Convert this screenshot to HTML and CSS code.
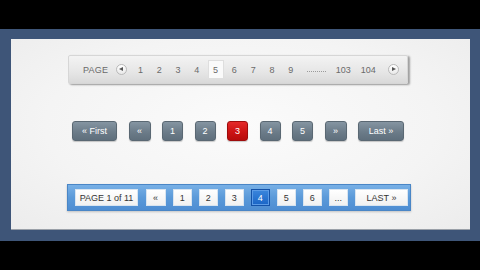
FILE: index.html
```html
<!DOCTYPE html>
<html>
<head>
    <title>Pagination</title>
    <link rel="stylesheet" href="styles.css">
</head>
<body>
    <div class="frame">
        <div class="panel">
            <div class="pager-gray">
                <span class="label">PAGE</span>
                <span class="circle prev"></span>
                <span class="num">1</span>
                <span class="num">2</span>
                <span class="num">3</span>
                <span class="num">4</span>
                <span class="num active">5</span>
                <span class="num">6</span>
                <span class="num">7</span>
                <span class="num">8</span>
                <span class="num">9</span>
                <span class="dots"></span>
                <span class="num wide">103</span>
                <span class="num wider">104</span>
                <span class="circle next"></span>
            </div>

            <div class="pager-buttons">
                <button class="btn first">&laquo; First</button>
                <button class="btn arrow">&laquo;</button>
                <button class="btn">1</button>
                <button class="btn">2</button>
                <button class="btn current">3</button>
                <button class="btn">4</button>
                <button class="btn">5</button>
                <button class="btn arrow">&raquo;</button>
                <button class="btn last">Last &raquo;</button>
            </div>

            <div class="pager-blue">
                <span class="box info">PAGE 1 of 11</span>
                <span class="box prev-box">&laquo;</span>
                <span class="box">1</span>
                <span class="box">2</span>
                <span class="box">3</span>
                <span class="box selected">4</span>
                <span class="box">5</span>
                <span class="box">6</span>
                <span class="box">...</span>
                <span class="box last-box">LAST &raquo;</span>
            </div>
        </div>
    </div>
</body>
</html>
```
FILE: styles.css
```css
body {
    margin: 0;
    height: 270px;
    background-color: #000;
    padding-top: 29px;
    box-sizing: border-box;
    font-family: "Liberation Sans", Arial, sans-serif;
}

.frame {
    height: 212px;
    box-sizing: border-box;
    padding: 10px 10px 11px 11px;
    background-color: #3e5578;
}

.panel {
    height: 191px;
    box-sizing: border-box;
    padding-left: 57px;
    display: flex;
    flex-direction: column;
    align-items: flex-start;
    background: radial-gradient(ellipse at 50% 45%, #fbfbfb 0%, #f4f4f4 60%, #ececec 100%);
    box-shadow: inset 0 -1px 0 #9aa0a8;
}

/* top: grey strip */
.pager-gray {
    margin-top: 16px;
    width: 340px;
    height: 29px;
    box-sizing: border-box;
    display: flex;
    align-items: center;
    padding-left: 14px;
    background: linear-gradient(#f3f3f3, #e6e6e6 60%, #d9d9d9);
    border: 1px solid #d6d6d6;
    border-radius: 2px;
    box-shadow: 2px 1px 2px rgba(0, 0, 0, 0.35), 0 1px 0 #e9e9e9;
    font-size: 9px;
    color: #6a6a6a;
}

.label {
    width: 22px;
    letter-spacing: 0.2px;
}

.circle {
    position: relative;
    width: 9px;
    height: 9px;
    margin-left: 11px;
    margin-right: 4px;
    border: 1px solid #b9b9b9;
    border-radius: 50%;
    background: linear-gradient(#ffffff, #e9e9e9);
}

.circle::after {
    content: "";
    position: absolute;
    top: 2px;
    border-top: 2.5px solid transparent;
    border-bottom: 2.5px solid transparent;
}

.circle.prev::after {
    left: 2px;
    border-right: 4px solid #555;
}

.circle.next {
    margin-left: 5px;
}

.circle.next::after {
    left: 3px;
    border-left: 4px solid #555;
}

.num {
    width: 18.8px;
    text-align: center;
    line-height: 18px;
}

.num.active {
    width: 16px;
    margin: 0 1.4px;
    height: 19px;
    line-height: 19px;
    background-color: #fafafa;
    border: 1px solid #dedede;
    box-sizing: border-box;
}

.num.wide {
    width: 20px;
}

.num.wider {
    width: 30px;
}

.dots {
    width: 19px;
    margin: 0 7px;
    height: 1px;
    margin-top: 5px;
    border-top: 1px dotted #9a9a9a;
}

/* middle: slate buttons */
.pager-buttons {
    margin-top: 37px;
    margin-left: 4px;
    display: flex;
    gap: 11.5px;
}

.btn {
    width: 21px;
    height: 20px;
    padding: 0;
    border: 1px solid #5a6873;
    border-radius: 3px;
    background: linear-gradient(#8595a2, #6c7c89 55%, #5f6f7c);
    box-shadow: 0 1px 1px rgba(0, 0, 0, 0.2);
    color: #fff;
    font-family: "Liberation Sans", Arial, sans-serif;
    font-size: 9px;
}

.btn.first {
    width: 45px;
}

.btn.arrow {
    width: 22px;
}

.btn.arrow + .btn.last,
.btn.last {
    width: 46px;
}

.btn.current {
    border-color: #9e0d0d;
    background: linear-gradient(#e52a2a, #cc1414 55%, #b70c0c);
}

/* bottom: blue strip */
.pager-blue {
    margin-top: 43px;
    margin-left: -1px;
    width: 344px;
    height: 27px;
    box-sizing: border-box;
    display: flex;
    align-items: center;
    gap: 7.5px;
    padding-left: 7px;
    background: linear-gradient(#78b0e6, #5b9ad9 50%, #4e8dd2);
    border: 1px solid #4a86c6;
    box-shadow: 0 1px 2px rgba(0, 0, 0, 0.2);
}

.box {
    width: 18.5px;
    height: 17px;
    box-sizing: border-box;
    text-align: center;
    line-height: 17px;
    font-size: 9px;
    color: #333;
    background: linear-gradient(#ffffff, #f1f1f1);
    border: 1px solid #d8e4f0;
}

.box.info {
    width: 63px;
}

.box.prev-box {
    width: 20px;
}

.box.last-box {
    width: 53px;
}

.box.selected {
    color: #fff;
    background: linear-gradient(#3b86dc, #1a65c6);
    border: 1px solid #1452a8;
    box-shadow: inset 0 0 0 1px #5b9be6;
}
```
